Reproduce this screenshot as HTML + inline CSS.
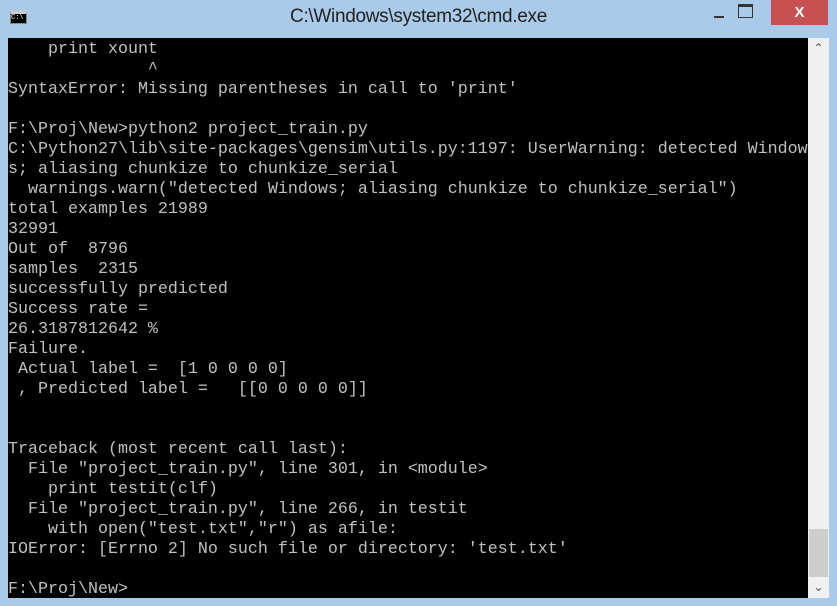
<!DOCTYPE html>
<html><head><style>
html,body{margin:0;padding:0;width:837px;height:606px;overflow:hidden;background:#aacaea;}
#title{position:absolute;left:0;top:0;width:837px;height:38px;background:#aacaea;}
#t{position:absolute;left:0;width:837px;top:6px;text-align:center;font:19px "Liberation Sans",sans-serif;color:#222;letter-spacing:-0.3px}
#icon{position:absolute;left:10px;top:11px;width:17px;height:13px;background:#000;border:1px solid #888;border-top:3px solid #ccc;box-sizing:border-box;color:#fff;font:7px "Liberation Mono",monospace;line-height:8px}
#close{position:absolute;left:771px;top:0;width:57px;height:25px;background:#c75050;color:#fff;font:bold 15px "Liberation Sans",sans-serif;text-align:center;line-height:26px}
#min{position:absolute;left:714px;top:16px;width:10px;height:2px;background:#333}
#max{position:absolute;left:738px;top:4px;width:13px;height:10px;border:1px solid #333;border-top:3px solid #333}
#con{position:absolute;left:8px;top:38px;width:800px;height:560px;background:#000;overflow:hidden}
pre{margin:0;position:absolute;left:0;top:2px;font:16.67px/20px "Liberation Mono",monospace;color:#c0c0c0;white-space:pre}
#sb{position:absolute;left:808px;top:38px;width:21px;height:560px;background:#f0f0f0}
#thumb{position:absolute;left:1px;top:491px;width:19px;height:48px;background:#cdcdcd}
.ar{position:absolute;left:0;width:21px;text-align:center;color:#555;font:12px "Liberation Sans",sans-serif}
</style></head><body>
<div id="title"><div id="icon">C:\</div><div id="t">C:\Windows\system32\cmd.exe</div><div id="min"></div><div id="max"></div><div id="close">X</div></div>
<div id="con"><pre>    print xount
              ^
SyntaxError: Missing parentheses in call to 'print'

F:\Proj\New>python2 project_train.py
C:\Python27\lib\site-packages\gensim\utils.py:1197: UserWarning: detected Window
s; aliasing chunkize to chunkize_serial
  warnings.warn("detected Windows; aliasing chunkize to chunkize_serial")
total examples 21989
32991
Out of  8796
samples  2315
successfully predicted
Success rate =
26.3187812642 %
Failure.
 Actual label =  [1 0 0 0 0]
 , Predicted label =   [[0 0 0 0 0]]


Traceback (most recent call last):
  File "project_train.py", line 301, in &lt;module&gt;
    print testit(clf)
  File "project_train.py", line 266, in testit
    with open("test.txt","r") as afile:
IOError: [Errno 2] No such file or directory: 'test.txt'

F:\Proj\New&gt;</pre></div>
<div id="sb"><div class="ar" style="top:3px">&#8963;</div><div id="thumb"></div><div class="ar" style="top:542px">&#8964;</div></div>
</body></html>
